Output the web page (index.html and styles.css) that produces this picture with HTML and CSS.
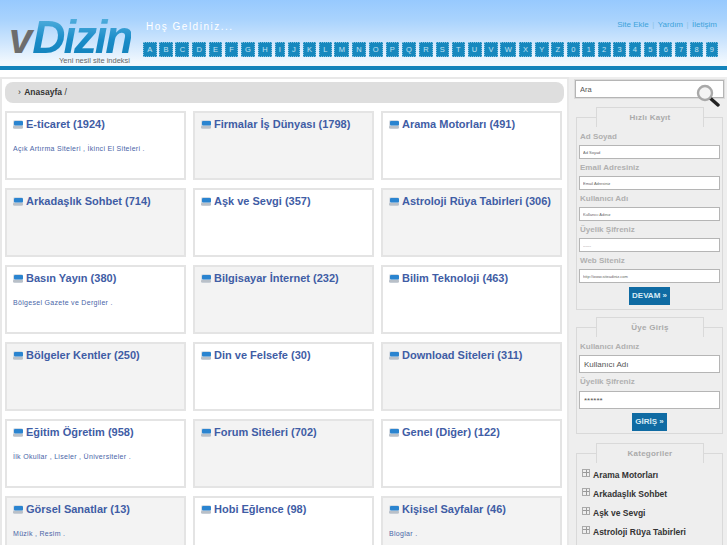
FILE: index.html
```html
<html>
	<head>
		<title>vDizin</title>
		<link rel="stylesheet" href="styles.css">
	</head>
	<body>
		<div id="header">
			<div id="logo">
				<div id="logo-text"><span class="logo-v">v</span><span class="logo-d">Dizin</span></div>
				<div id="slogan">Yeni nesil site indeksi</div>
			</div>
			<div id="head-mid">
				<div id="welcome">Hoş Geldiniz...</div>
				<div id="letters">
					<a>A</a><a>B</a><a>C</a><a>D</a><a>E</a><a>F</a><a>G</a><a>H</a><a>I</a><a>J</a><a>K</a><a>L</a><a>M</a><a>N</a><a>O</a><a>P</a><a>Q</a><a>R</a><a>S</a><a>T</a><a>U</a><a>V</a><a>W</a><a>X</a><a>Y</a><a>Z</a><a>0</a><a>1</a><a>2</a><a>3</a><a>4</a><a>5</a><a>6</a><a>7</a><a>8</a><a>9</a>
				</div>
			</div>
			<div id="toplinks"><a>Site Ekle</a><i>|</i><a>Yardım</a><i>|</i><a>İletişim</a></div>
		</div>
		<div id="wrap">
			<div id="main">
				<div id="crumb"><span class="arrow">›</span> <b>Anasayfa</b> /</div>
				<div id="cards">
					<div class="card"><h3><svg class="ico" viewBox="0 0 10 9"><use href="#folder"/></svg>E-ticaret (1924)</h3><p>Açık Artırma Siteleri , İkinci El Siteleri .</p></div>
					<div class="card alt"><h3><svg class="ico" viewBox="0 0 10 9"><use href="#folder"/></svg>Firmalar İş Dünyası (1798)</h3></div>
					<div class="card"><h3><svg class="ico" viewBox="0 0 10 9"><use href="#folder"/></svg>Arama Motorları (491)</h3></div>
					<div class="card alt"><h3><svg class="ico" viewBox="0 0 10 9"><use href="#folder"/></svg>Arkadaşlık Sohbet (714)</h3></div>
					<div class="card"><h3><svg class="ico" viewBox="0 0 10 9"><use href="#folder"/></svg>Aşk ve Sevgi (357)</h3></div>
					<div class="card alt"><h3><svg class="ico" viewBox="0 0 10 9"><use href="#folder"/></svg>Astroloji Rüya Tabirleri (306)</h3></div>
					<div class="card"><h3><svg class="ico" viewBox="0 0 10 9"><use href="#folder"/></svg>Basın Yayın (380)</h3><p>Bölgesel Gazete ve Dergiler .</p></div>
					<div class="card alt"><h3><svg class="ico" viewBox="0 0 10 9"><use href="#folder"/></svg>Bilgisayar İnternet (232)</h3></div>
					<div class="card"><h3><svg class="ico" viewBox="0 0 10 9"><use href="#folder"/></svg>Bilim Teknoloji (463)</h3></div>
					<div class="card alt"><h3><svg class="ico" viewBox="0 0 10 9"><use href="#folder"/></svg>Bölgeler Kentler (250)</h3></div>
					<div class="card"><h3><svg class="ico" viewBox="0 0 10 9"><use href="#folder"/></svg>Din ve Felsefe (30)</h3></div>
					<div class="card alt"><h3><svg class="ico" viewBox="0 0 10 9"><use href="#folder"/></svg>Download Siteleri (311)</h3></div>
					<div class="card"><h3><svg class="ico" viewBox="0 0 10 9"><use href="#folder"/></svg>Eğitim Öğretim (958)</h3><p>İlk Okullar , Liseler , Üniversiteler .</p></div>
					<div class="card alt"><h3><svg class="ico" viewBox="0 0 10 9"><use href="#folder"/></svg>Forum Siteleri (702)</h3></div>
					<div class="card"><h3><svg class="ico" viewBox="0 0 10 9"><use href="#folder"/></svg>Genel (Diğer) (122)</h3></div>
					<div class="card alt"><h3><svg class="ico" viewBox="0 0 10 9"><use href="#folder"/></svg>Görsel Sanatlar (13)</h3><p>Müzik , Resim .</p></div>
					<div class="card"><h3><svg class="ico" viewBox="0 0 10 9"><use href="#folder"/></svg>Hobi Eğlence (98)</h3></div>
					<div class="card alt"><h3><svg class="ico" viewBox="0 0 10 9"><use href="#folder"/></svg>Kişisel Sayfalar (46)</h3><p>Bloglar .</p></div>
				</div>
			</div>
			<div id="side">
				<div id="search">
					<input type="text" value="Ara">
					<svg id="lens" viewBox="0 0 24 24">
						<line x1="14" y1="14" x2="22" y2="21" stroke="#222" stroke-width="3.4" stroke-linecap="round"/>
						<circle cx="9" cy="9" r="7" fill="#f4f4f4" stroke="#a9a9a9" stroke-width="2.4"/>
					</svg>
				</div>
				<div class="box">
					<div class="tab">Hızlı Kayıt</div>
					<label>Ad Soyad</label>
					<input class="small" type="text" value="Ad Soyad">
					<label>Email Adresiniz</label>
					<input class="small" type="text" value="Email Adresiniz">
					<label>Kullanıcı Adı</label>
					<input class="small" type="text" value="Kullanıcı Adınız">
					<label>Üyelik Şifreniz</label>
					<input class="small" type="text" value="------">
					<label>Web Siteniz</label>
					<input class="small" type="text" value="http://www.siteadiniz.com">
					<div class="btn-row"><a class="btn">DEVAM »</a></div>
				</div>
				<div class="box login">
					<div class="tab">Üye Giriş</div>
					<label>Kullanıcı Adınız</label>
					<input class="big" type="text" value="Kullanıcı Adı">
					<label>Üyelik Şifreniz</label>
					<input class="big" type="text" value="******">
					<div class="btn-row"><a class="btn">GİRİŞ »</a></div>
				</div>
				<div class="box cats">
					<div class="tab">Kategoriler</div>
					<ul>
						<li><span class="plus"></span>Arama Motorları</li>
						<li><span class="plus"></span>Arkadaşlık Sohbet</li>
						<li><span class="plus"></span>Aşk ve Sevgi</li>
						<li><span class="plus"></span>Astroloji Rüya Tabirleri</li>
					</ul>
				</div>
			</div>
		</div>
		<!-- small folder icon used on every category card -->
		<svg width="0" height="0" class="defs">
			<symbol id="folder" viewBox="0 0 10 9">
				<rect x="0" y="0" width="10" height="9" rx="2" fill="#d5dce4"/>
				<rect x="1" y="1" width="9" height="4.5" rx="1" fill="#2a84d0"/>
				<rect x="0" y="6" width="10" height="2.5" rx="1" fill="#b9c0c8"/>
			</symbol>
		</svg>
	</body>
</html>
```
FILE: styles.css
```css
*{
	margin:0px;
	padding:0px;
	box-sizing:border-box;
}
html,body{
	width:727px;
	height:545px;
	overflow:hidden;
}
body{
	background-color:white;
	font-family:"Liberation Sans",Arial,sans-serif;
}
.defs{
	position:absolute;
}

/* header */
#header{
	display:flex;
	height:70px;
	background:linear-gradient(#97c9fe 0%,#a9d3fd 30%,#cfe6fd 65%,#f1f8fe 94%);
	border-bottom:4px solid #1283bb;
}
#logo{
	width:143px;
	padding:18px 0 0 9px;
	flex:none;
}
#logo-text{
	font-size:46px;
	line-height:38px;
	font-weight:bold;
	font-style:italic;
	white-space:nowrap;
	height:38px;
}
.logo-v{
	font-size:42px;
	color:#6d6d6d;
}
.logo-d{
	letter-spacing:-2.2px;
	background:linear-gradient(#63b9e4,#1a8cc8 55%,#127fb8);
	-webkit-background-clip:text;
	background-clip:text;
	color:transparent;
}
#slogan{
	font-size:7.5px;
	line-height:9px;
	color:#666;
	text-align:right;
	padding-right:13px;
	white-space:nowrap;
}
#head-mid{
	padding-top:21px;
	width:580px;
	flex:none;
}
#welcome{
	color:white;
	font-size:10px;
	letter-spacing:1.5px;
	padding-left:3px;
	height:21px;
}
#letters{
	display:flex;
	gap:2.7px;
	white-space:nowrap;
}
#letters a{
	display:block;
	height:15px;
	padding:0 3.27px;
	background-color:#1788be;
	border:1px dotted #7fbfdf;
	color:#c2e2f3;
	font-size:7.5px;
	line-height:13px;
	text-align:center;
}
#toplinks{
	position:absolute;
	top:20px;
	right:10px;
	font-size:8px;
	color:#3ea3da;
	white-space:nowrap;
}
#toplinks i{
	font-style:normal;
	color:#8fc3e6;
	margin:0 3.5px;
}

/* page body */
#wrap{
	display:flex;
	margin-top:7px;
}
#main{
	width:569px;
	flex:none;
	border:2px solid #e8e8e8;
	border-bottom:0;
	padding:3px 3px 0 3px;
}
#crumb{
	height:21px;
	background-color:#dedede;
	border-radius:8px;
	font-size:8.5px;
	line-height:21px;
	padding-left:13px;
	color:#333;
}
#crumb .arrow{
	margin-right:1px;
}
#cards{
	display:grid;
	grid-template-columns:repeat(3,181px);
	grid-auto-rows:69px;
	column-gap:7px;
	row-gap:8px;
	margin-top:8px;
}
.card{
	border:2px solid #e4e4e4;
	background-color:white;
	padding:4px 6px;
}
.card.alt{
	background-color:#f3f3f3;
}
.card h3{
	display:flex;
	align-items:center;
	font-size:11px;
	line-height:14px;
	font-weight:bold;
	color:#3f5da5;
	white-space:nowrap;
}
.ico{
	width:10px;
	height:9px;
	margin-right:3px;
	flex:none;
}
.card p{
	margin-top:13px;
	font-size:7px;
	letter-spacing:.3px;
	line-height:10px;
	color:#4a66a8;
}

/* right column */
#side{
	width:158px;
	flex:none;
	background-color:#eeeeee;
	padding:2px 2px 0 5px;
}
#search{
	position:relative;
	height:20px;
	border:1px solid #dcdcdc;
}
#search input{
	display:block;
	width:100%;
	height:100%;
	border:1px solid #b5b5b5;
	background:white;
	font-family:"Liberation Sans",Arial,sans-serif;
	font-size:7.5px;
	color:#555;
	padding-left:4px;
	outline:0;
}
#lens{
	position:absolute;
	top:4px;
	right:4px;
	width:24px;
	height:24px;
}
.box{
	width:147px;
	margin-left:2px;
	margin-top:18px;
	padding:9px 2px 4px 2px;
	border:1px solid #d9d9d9;
}
.tab{
	width:108px;
	height:20px;
	margin:-20px 0 1px 17px;
	background-color:#eeeeee;
	border:1px solid #d9d9d9;
	border-bottom:0;
	color:#aaa;
	font-size:8px;
	font-weight:bold;
	letter-spacing:.25px;
	line-height:19px;
	text-align:center;
}
.box label{
	display:block;
	height:17px;
	padding-left:1px;
	font-size:8px;
	font-weight:bold;
	line-height:17px;
	color:#b0b0b0;
}
.box input{
	display:block;
	width:141px;
	border:1px solid #b5b5b5;
	background:white;
	font-family:"Liberation Sans",Arial,sans-serif;
	color:#666;
	outline:0;
}
.box input.small{
	height:14px;
	font-size:4px;
	padding-left:3px;
}
.box input.big{
	height:18px;
	font-size:8px;
	padding-left:4px;
	color:#555;
}
.btn-row{
	display:flex;
	justify-content:center;
	margin-top:4px;
}
.btn{
	display:block;
	height:18px;
	padding:0 3px;
	background-color:#0f6ba3;
	color:#d8ebf6;
	font-size:8px;
	font-weight:bold;
	line-height:18px;
}
.box.login{
	margin-top:17px;
	padding-bottom:2px;
}
.box.login label + input + label{
	height:18px;
}
.box.cats{
	margin-top:19px;
	border-bottom:0;
}
.cats ul{
	list-style:none;
	margin-top:2px;
}
.cats li{
	display:flex;
	align-items:center;
	height:19px;
	padding-left:3px;
	font-size:8.5px;
	font-weight:bold;
	color:#333;
	white-space:nowrap;
}
.plus{
	position:relative;
	top:-2px;
	width:8px;
	height:8px;
	margin-right:3px;
	border:1px solid #aaa;
	background:linear-gradient(#999,#999) center/6px 1px no-repeat,linear-gradient(#999,#999) center/1px 6px no-repeat;
	flex:none;
}
```
